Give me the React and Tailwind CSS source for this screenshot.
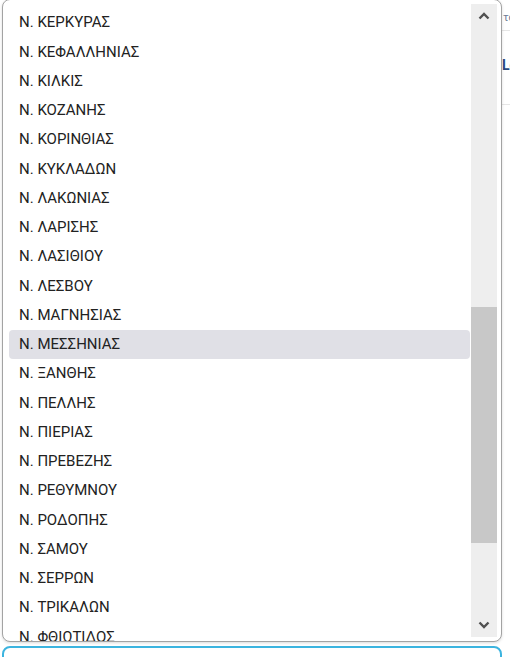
import React from "react";

const items = [
  "Ν. ΚΕΡΚΥΡΑΣ",
  "Ν. ΚΕΦΑΛΛΗΝΙΑΣ",
  "Ν. ΚΙΛΚΙΣ",
  "Ν. ΚΟΖΑΝΗΣ",
  "Ν. ΚΟΡΙΝΘΙΑΣ",
  "Ν. ΚΥΚΛΑΔΩΝ",
  "Ν. ΛΑΚΩΝΙΑΣ",
  "Ν. ΛΑΡΙΣΗΣ",
  "Ν. ΛΑΣΙΘΙΟΥ",
  "Ν. ΛΕΣΒΟΥ",
  "Ν. ΜΑΓΝΗΣΙΑΣ",
  "Ν. ΜΕΣΣΗΝΙΑΣ",
  "Ν. ΞΑΝΘΗΣ",
  "Ν. ΠΕΛΛΗΣ",
  "Ν. ΠΙΕΡΙΑΣ",
  "Ν. ΠΡΕΒΕΖΗΣ",
  "Ν. ΡΕΘΥΜΝΟΥ",
  "Ν. ΡΟΔΟΠΗΣ",
  "Ν. ΣΑΜΟΥ",
  "Ν. ΣΕΡΡΩΝ",
  "Ν. ΤΡΙΚΑΛΩΝ",
  "Ν. ΦΘΙΩΤΙΔΟΣ",
  "Ν. ΦΛΩΡΙΝΑΣ",
  "Ν. ΦΩΚΙΔΟΣ",
];

const Chevron = ({ up }) => (
  <svg width="12" height="8" viewBox="0 0 12 8">
    <path
      d={up ? "M1.5 6.5 L6 2 L10.5 6.5" : "M1.5 1.5 L6 6 L10.5 1.5"}
      fill="none"
      stroke="#505050"
      strokeWidth="2.4"
    />
  </svg>
);

export default function App() {
  return (
    <div
      className="relative w-[510px] h-[657px] overflow-hidden bg-white"
      style={{ fontFamily: "Roboto, 'Noto Sans', sans-serif" }}
    >
      {/* page behind */}
      <div className="absolute left-[502px] top-0 w-[200px]">
        <div className="h-[31px] border-b border-[#e6e6e6] pt-[11px] pl-px text-[11px] leading-[14px] text-[#6b7b95]">
          το
        </div>
        <div className="h-[74px] border-b border-[#e6e6e6] pt-[25px] text-[14px] font-bold leading-[18px] text-[#2a4a7f]">
          Lo
        </div>
      </div>
      <div className="absolute left-[2px] top-[646px] w-[500px] h-[30px] rounded-t-[8px] border-2 border-[#3cb4df] bg-white" />

      {/* dropdown */}
      <div className="absolute left-[2px] top-[-1px] w-[500px] h-[643px] rounded-[8px] border border-[#a3a3a3] bg-white shadow-[0_1px_3px_rgba(0,0,0,0.15)] flex">
        <div className="flex-1 overflow-hidden pl-[6px] pt-[8px]">
          {items.map((it, i) => (
            <div
              key={it}
              className={
                "h-[29.25px] flex items-center pl-[10px] text-[15px] text-[#222222] rounded-[4px] " +
                (i === 11 ? "bg-[#e0e0e6]" : "")
              }
            >
              {it}
            </div>
          ))}
        </div>
        <div className="w-[26px] mt-[4px] mb-[4px] mr-[4px] ml-px bg-[#eeeeee] flex flex-col">
          <div className="h-[24px] flex items-center justify-center">
            <Chevron up />
          </div>
          <div className="flex-1 pt-[279px] pb-[70px]">
            <div className="h-full bg-[#c8c8c8]" />
          </div>
          <div className="h-[24px] flex items-center justify-center">
            <Chevron />
          </div>
        </div>
      </div>
    </div>
  );
}
